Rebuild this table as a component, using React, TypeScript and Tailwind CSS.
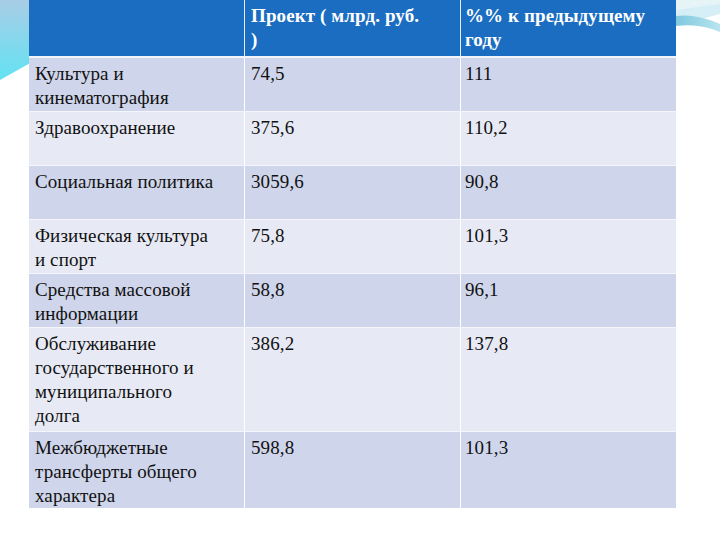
const rows = [
  { name: ["Культура и", "кинематография"], a: "74,5", b: "111", h: "h-[53px]", dark: true },
  { name: ["Здравоохранение"], a: "375,6", b: "110,2", h: "h-[54px]", dark: false },
  { name: ["Социальная политика"], a: "3059,6", b: "90,8", h: "h-[54px]", dark: true },
  { name: ["Физическая культура", "и спорт"], a: "75,8", b: "101,3", h: "h-[54px]", dark: false },
  { name: ["Средства массовой", "информации"], a: "58,8", b: "96,1", h: "h-[54px]", dark: true },
  { name: ["Обслуживание", "государственного и", "муниципального", "долга"], a: "386,2", b: "137,8", h: "h-[104px]", dark: false },
  { name: ["Межбюджетные", "трансферты общего", "характера"], a: "598,8", b: "101,3", h: "h-[76px]", dark: true },
];

function Decor() {
  return (
    <svg className="absolute inset-0" width="720" height="540" viewBox="0 0 720 540">
      <defs>
        <linearGradient id="lt" x1="0" y1="0" x2="0" y2="1">
          <stop offset="0" stopColor="#a9cde6" />
          <stop offset="1" stopColor="#62e2f3" />
        </linearGradient>
        <linearGradient id="rt" x1="0" y1="0" x2="1" y2="0">
          <stop offset="0" stopColor="#7fc9de" />
          <stop offset="1" stopColor="#b9e4ef" />
        </linearGradient>
      </defs>
      <polygon points="0,0 32,0 32,62 0,80" fill="url(#lt)" />
      <path d="M676,8 C690,6 705,4 720,2 L720,14 C705,18 690,22 676,26 Z" fill="#d6eef5" />
      <path d="M676,16 C692,14 706,18 720,24 L720,32 C706,26 692,24 676,26 Z" fill="url(#rt)" />
      <path d="M676,0 L720,0 L720,4 C705,6 690,8 676,10 Z" fill="#e6f4f8" />
    </svg>
  );
}

export default function App() {
  return (
    <div className="relative w-[720px] h-[540px] bg-white overflow-hidden font-['Liberation_Serif',serif]">
      <Decor />
      <div className="relative ml-[29px] w-[647px] flex flex-col bg-white text-[19px] leading-[24px] tracking-[0.1px]">
        <div className="grid grid-cols-[215px_215px_215px] gap-x-[1px] h-[56px] bg-[#e6ecf6]">
          <div className="bg-[#1b6dc1]" />
          <div className="bg-[#1b6dc1] px-[6px] pt-[4px] text-white font-bold">
            <div>Проект ( млрд. руб.</div>
            <div>)</div>
          </div>
          <div className="bg-[#1b6dc1] px-[4px] pt-[4px] text-white font-bold">
            <div>%% к предыдущему</div>
            <div>году</div>
          </div>
        </div>
        <div className="h-[2px] bg-[#f2f4fa]" />
        {rows.map((r, i) => (
          <div
            key={i}
            className={`grid grid-cols-[215px_215px_215px] gap-x-[1px] ${r.h} ${i > 0 ? "border-t border-[#f4f6fb]" : ""} text-[#111]`}
          >
            <div className={`${r.dark ? "bg-[#cfd5ea]" : "bg-[#e7eaf5]"} px-[6px] pt-[4px]`}>
              {r.name.map((n) => (
                <div key={n}>{n}</div>
              ))}
            </div>
            <div className={`${r.dark ? "bg-[#cfd5ea]" : "bg-[#e7eaf5]"} px-[6px] pt-[4px]`}>{r.a}</div>
            <div className={`${r.dark ? "bg-[#cfd5ea]" : "bg-[#e7eaf5]"} px-[4px] pt-[4px]`}>{r.b}</div>
          </div>
        ))}
      </div>
    </div>
  );
}
